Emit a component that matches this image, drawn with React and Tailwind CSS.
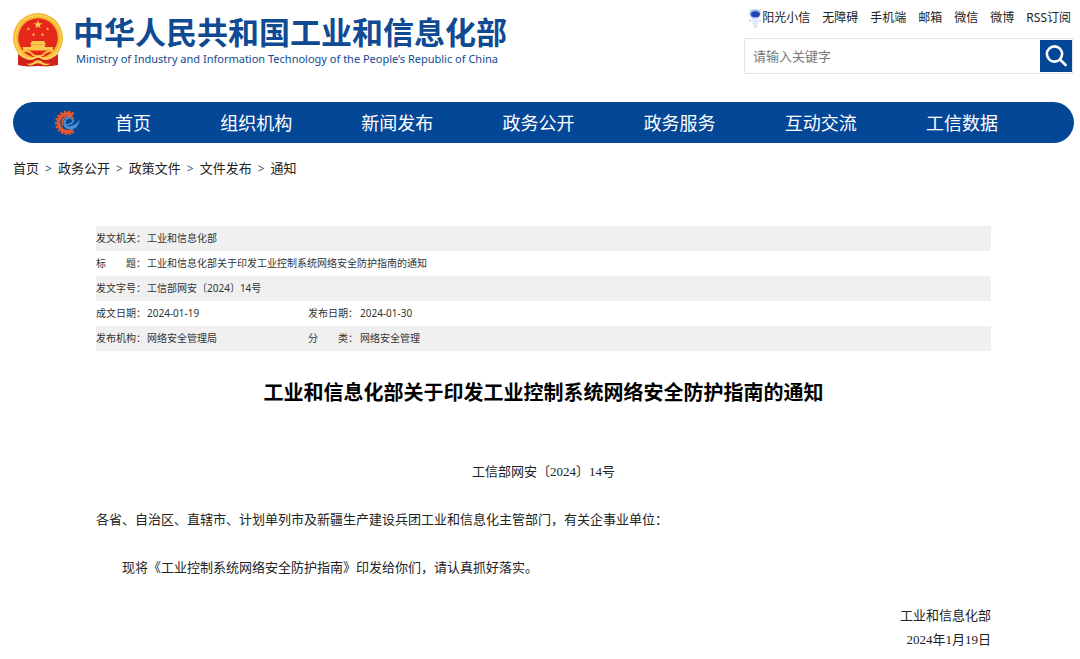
import React from "react";

const topLinks = ["无障碍", "手机端", "邮箱", "微信", "微博", "RSS订阅"];

const navItems = [
  "首页",
  "组织机构",
  "新闻发布",
  "政务公开",
  "政务服务",
  "互动交流",
  "工信数据",
];

const crumbs = ["首页", "政务公开", "政策文件", "文件发布", "通知"];

const metaRows = [
  [["发文机关：", "工业和信息化部"]],
  [["标　　题：", "工业和信息化部关于印发工业控制系统网络安全防护指南的通知"]],
  [["发文字号：", "工信部网安〔2024〕14号"]],
  [
    ["成文日期：", "2024-01-19"],
    ["发布日期：", "2024-01-30"],
  ],
  [
    ["发布机构：", "网络安全管理局"],
    ["分　　类：", "网络安全管理"],
  ],
];

const STAR = "M0 -1 L0.24 -0.32 L0.95 -0.31 L0.38 0.12 L0.59 0.81 L0 0.4 L-0.59 0.81 L-0.38 0.12 L-0.95 -0.31 L-0.24 -0.32 Z";

const Emblem = () => (
  <svg viewBox="0 0 50 54" className="w-[50px] h-[54px] shrink-0" aria-hidden="true">
    <path d="M6 38 L6 52 Q13 54 19 53 L31 53 Q37 54 43 51 L44 38 Z" fill="#c8201c" />
    <circle cx="25" cy="25" r="25" fill="#f5b92e" />
    <circle cx="25" cy="25" r="22.6" fill="none" stroke="#fbd05c" strokeWidth="1.6" />
    <circle cx="25" cy="25" r="19.8" fill="#e8271b" />
    <g fill="#fbc94b">
      <path d={STAR} transform="translate(25 11.6) scale(4.6)" />
      <path d={STAR} transform="translate(15.4 16) scale(1.9)" />
      <path d={STAR} transform="translate(34.6 16) scale(1.9)" />
      <path d={STAR} transform="translate(20.6 21.6) scale(1.9)" />
      <path d={STAR} transform="translate(29.4 21.6) scale(1.9)" />
      <path d="M19 28 H31 L33 31.5 H17 Z" />
      <path d="M18 31.5 H32 V34 H18 Z" />
      <path d="M9.5 34 H40.5 L39.5 37.5 H10.5 Z" />
    </g>
    <path d="M5 41 Q14 46 20 45 H30 Q36 46 45 41 L45 52 Q36 54 25 53 Q14 54 5 52 Z" fill="#d0221b" />
    <path d="M9 38 Q17 37.5 20 42 Q25 44.5 30 42 Q33 37.5 41 38" fill="none" stroke="#f8c345" strokeWidth="1.8" />
    <path d="M5 39.5 Q14 48 21 45 Q25 42.5 29 45 Q36 48 45 39.5" fill="none" stroke="#fbd05c" strokeWidth="2.2" />
    <path d="M13 50.5 Q19 51.5 21 48.5 Q25 46 29 48.5 Q31 51.5 38 50.5 Q32 54 28.5 51 Q25 49.5 21.5 51 Q18 54 13 50.5 Z" fill="#fbc94b" />
  </svg>
);

const Robot = () => (
  <svg viewBox="0 0 14 20" className="w-3.5 h-5" aria-hidden="true">
    <path d="M1.5 1 L3 3 M12.5 1 L11 3" stroke="#d6dfa8" strokeWidth="1" />
    <ellipse cx="7" cy="6" rx="5.6" ry="4.8" fill="#9fb9f2" />
    <ellipse cx="7.4" cy="6.2" rx="4.4" ry="2.9" fill="#2443b4" />
    <path d="M3.5 11 Q7 12.5 10.5 11 Q11.5 15 8.8 17.5 H5.4 Q2.8 15 3.5 11 Z" fill="#dfeafb" />
    <path d="M2.5 11.5 L1.2 14 M11.5 11.5 L12.8 13.5" stroke="#b9d3f3" strokeWidth="1.2" />
    <path d="M6 18.6 H9" stroke="#c9dbb0" strokeWidth="1.2" />
  </svg>
);

const GearLogo = () => (
  <svg viewBox="0 0 28 28" className="w-7 h-7 shrink-0" aria-hidden="true">
    {/* teeth on the left, open towards the right */}
    <path
      d="M20.5 5 A10.8 10.8 0 1 0 20.5 22.6"
      fill="none"
      stroke="#e2572b"
      strokeWidth="3"
      strokeDasharray="2.2 1.6"
    />
    <path d="M19.5 6.4 A9 9 0 1 0 20 21" fill="none" stroke="#e2572b" strokeWidth="3.6" />
    <path d="M9.5 16.8 Q8.4 8.4 15 7.2 Q21 7 20 12" fill="none" stroke="#dd6a45" strokeWidth="1.4" />
    <path
      d="M19.2 11.6 Q18.6 9.2 15.6 9.8 Q12.4 11.2 12.8 14.4 Q13.6 18 18 17 Q23.5 15.4 26.6 10.4 Q26 17.6 20 20 Q13 21.8 10.8 16.6 Q9.6 10.8 14.4 8.4 Q19.4 7.2 19.2 11.6 Z"
      fill="#4a90d2"
    />
    <path d="M13.6 15.4 Q18.5 16 20.6 11.4" fill="none" stroke="#4a90d2" strokeWidth="1.5" />
  </svg>
);

const SearchBox = () => (
  <form
    className="flex items-center w-[329px] h-9 border border-[#e3e3e3] pl-2"
    onSubmit={(e) => e.preventDefault()}
  >
    <input
      type="text"
      aria-label="请输入关键字"
      placeholder="请输入关键字"
      className="flex-1 min-w-0 h-8 text-[13px] placeholder:text-[#777] outline-none"
    />
    <button
      type="submit"
      aria-label="搜索"
      className="flex items-center justify-center w-8 h-8 bg-[#054797]"
    >
      <svg viewBox="0 0 24 24" className="w-6 h-6" fill="none" stroke="#fff" strokeWidth="2.6">
        <circle cx="10.5" cy="10" r="7.6" />
        <path d="M16 15.5 L21.6 21" strokeLinecap="round" />
      </svg>
    </button>
  </form>
);

const Header = () => (
  <header className="flex items-start justify-between">
    <a href="#" className="flex items-start pt-[13px]">
      <Emblem />
      <span className="block ml-2.5 text-[#0f4a93]">
        <span className="block text-[31px] leading-[38px] font-bold whitespace-nowrap">
          中华人民共和国工业和信息化部
        </span>
        <span className="block pl-[3px] text-[11px] leading-4 whitespace-nowrap font-['Noto_Sans',sans-serif]">
          Ministry of Industry and Information Technology of the People’s Republic of China
        </span>
      </span>
    </a>
    <div className="pt-2 pr-px">
      <div className="flex items-center justify-end gap-3 h-5 mb-2.5 pr-0.5 text-[12px] text-[#222] whitespace-nowrap">
        <a href="#" className="flex items-center">
          <Robot />
          阳光小信
        </a>
        {topLinks.map((link) => (
          <a key={link} href="#">
            {link}
          </a>
        ))}
      </div>
      <SearchBox />
    </div>
  </header>
);

const Navbar = () => (
  <nav className="flex items-center h-[41px] mt-7 pl-10 pr-[76px] rounded-full bg-[#054797]">
    <GearLogo />
    <ul className="flex flex-1 justify-between ml-[34px] pt-0.5">
      {navItems.map((item) => (
        <li key={item}>
          <a href="#" className="text-[18px] leading-6 text-white whitespace-nowrap">
            {item}
          </a>
        </li>
      ))}
    </ul>
  </nav>
);

const Breadcrumb = () => (
  <div className="flex items-center gap-1.5 h-5 mt-4 text-[13px] text-[#222]">
    {crumbs.map((crumb, i) => (
      <React.Fragment key={crumb}>
        {i > 0 && <span className="text-[12px] text-[#35597a]">&gt;</span>}
        <a href="#">{crumb}</a>
      </React.Fragment>
    ))}
  </div>
);

const MetaTable = () => (
  <table className="w-full table-fixed text-[10px] text-[#333]">
    <colgroup>
      <col className="w-[51px]" />
      <col className="w-[161px]" />
      <col className="w-[52px]" />
      <col />
    </colgroup>
    <tbody>
      {metaRows.map((row, i) => (
        <tr key={i} className="h-[25px] odd:bg-[#f0f0f0]">
          {row.map(([label, value]) => (
            <React.Fragment key={label}>
              <th scope="row" className="p-0 font-normal text-left whitespace-nowrap">
                {label}
              </th>
              <td className="p-0 whitespace-nowrap" colSpan={row.length === 1 ? 3 : 1}>
                {value}
              </td>
            </React.Fragment>
          ))}
        </tr>
      ))}
    </tbody>
  </table>
);

const Article = () => (
  <main className="mx-[83px] mt-[47px]">
    <MetaTable />
    <h1 className="mt-[26px] text-[20px] leading-8 font-bold text-center text-black">
      工业和信息化部关于印发工业控制系统网络安全防护指南的通知
    </h1>
    <div className="mt-[51px] text-[13px] leading-6 text-[#222] font-['Liberation_Serif','Noto_Sans_CJK_SC',serif]">
      <p className="text-center">工信部网安〔2024〕14号</p>
      <p className="mt-6">
        各省、自治区、直辖市、计划单列市及新疆生产建设兵团工业和信息化主管部门，有关企事业单位：
      </p>
      <p className="mt-6 indent-[26px]">
        现将《工业控制系统网络安全防护指南》印发给你们，请认真抓好落实。
      </p>
      <p className="mt-6 text-right">工业和信息化部</p>
      <p className="text-right">2024年1月19日</p>
    </div>
  </main>
);

const App = () => {
  return (
    <div
      lang="zh-CN"
      className="bg-white pl-[13px] pr-1.5 pb-2 font-['Noto_Sans','Noto_Sans_CJK_SC',sans-serif]"
    >
      <Header />
      <Navbar />
      <Breadcrumb />
      <Article />
    </div>
  );
};

export default App;
